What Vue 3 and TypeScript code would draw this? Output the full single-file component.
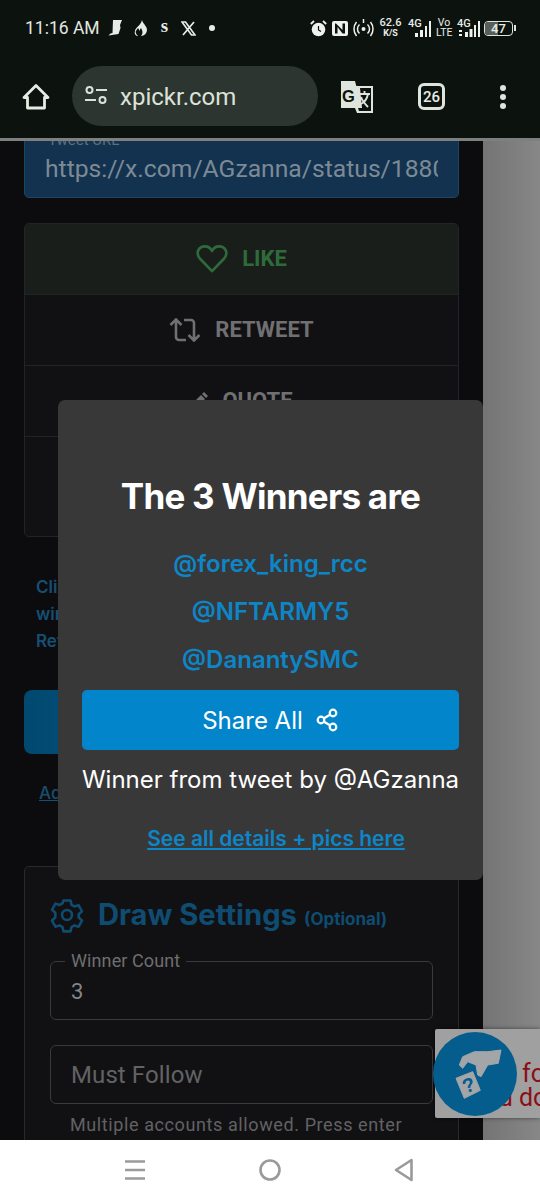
<template>
  <div class="phone">
    <header class="chrome">
      <div class="status">
        <span class="time">11:16 AM</span>
        <div class="notif">
          <svg width="15" height="18" viewBox="0 0 15 18"><path d="M5 1h9l-2 5 .5 3-2 6-10 1.500 2-2 2-.5z" fill="#e8ece6" /></svg>
          <svg width="14" height="16" viewBox="0 0 14 16"><path d="M8 0c1 4 5 6 5 10a6 6 0 0 1-6 6c2-2 2-5 0-8-1 1-1 2-1 3L4 8c-1 2-3 3-2 5 0 1 1 2 2 3-2 0-4-2-3-5 0-3 6-6 7-11z" fill="#e8ece6" /></svg>
          <span class="notif-s">s</span>
          <svg width="15" height="15" viewBox="0 0 15 15"><path d="M1 1h3.500l9.500 13h-3.500zM13 1 2 14" fill="none" stroke="#e8ece6" stroke-width="1.700" /></svg>
          <i class="notif-dot"></i>
        </div>
        <div class="sys">
          <svg width="17" height="17" viewBox="0 0 17 17"><circle cx="8.500" cy="9.500" r="6.800" fill="#eef1ec" /><path d="M8.500 6v4l2.500 1.500" fill="none" stroke="#0c130f" stroke-width="1.200" /><path d="M.8 4 4 1M16.200 4 13 1" stroke="#eef1ec" stroke-width="1.800" /></svg>
          <svg class="nfc" width="16" height="15" viewBox="0 0 16 15"><rect x="0" y="0" width="16" height="15" rx="2" fill="#eef1ec" /><path d="M4 2.500H3v10h2.500V6l5 6.500H13v-10h-2.500V9z" fill="#0c130f" /></svg>
          <svg class="hotspot" width="21" height="20" viewBox="0 0 21 20"><circle cx="10.500" cy="11" r="2" fill="#eef1ec" /><path d="M10.500 1v4M6.500 6.500a6 6 0 0 0 0 9M14.500 6.500a6 6 0 0 1 0 9M3.500 4a11 11 0 0 0 0 14M17.500 4a11 11 0 0 1 0 14" fill="none" stroke="#eef1ec" stroke-width="1.500" /></svg>
          <span class="speed">62.6<small>K/S</small></span>
          <div class="net">
            <span class="net-label">4G</span>
            <svg width="17" height="16" viewBox="0 0 17 16"><path d="M1 12h3v4H1zM6 9h3v7H6zM11 5h2v11h-2zM15 0h2v16h-2z" fill="#eef1ec" /></svg>
          </div>
          <span class="volte">Vo<br />LTE</span>
          <div class="net is-second">
            <span class="net-label">4G</span>
            <svg width="22" height="16" viewBox="0 0 22 16"><path d="M1 9h3v2H1zM1 13h3v2H1zM7 11h3v5H7zM11.500 8h3v8h-3zM16 4h2v12h-2zM20 0h2v16h-2z" fill="#eef1ec" /></svg>
          </div>
          <div class="battery">
            <div class="battery-body"><i class="battery-fill" :style="{ width: `${battery}%` }"></i><span>{{ battery }}</span></div>
            <i class="battery-tip"></i>
          </div>
        </div>
      </div>
      <div class="toolbar">
        <svg class="home" width="30" height="30" viewBox="0 0 30 30"><path d="M3 15.500 15 3.500l12 12h-3.500V26h-17V15.500z" fill="none" stroke="#e6ebe3" stroke-width="2.800" stroke-linejoin="round" /></svg>
        <div class="omnibox">
          <svg width="24" height="24" viewBox="0 0 24 24" fill="none" stroke="#dce2da" stroke-width="2"><circle cx="5.500" cy="6" r="3" /><path d="M12 6h11M1 16h11" /><circle cx="18.500" cy="16" r="3" /></svg>
          <span>xpickr.com</span>
        </div>
        <svg class="translate" width="34" height="34" viewBox="0 0 34 34">
          <path d="M1 1h14l7 27H1z" fill="#dfe5dc" />
          <path d="M15 6h18v27H17l-2-5z" fill="#dfe5dc" />
          <path d="M20 8h11v23H19l-1-3h4z" fill="#0c130f" />
          <text x="2" y="22" class="translate-g">G</text>
          <path d="M19 14h11M24.500 11v3M28 14c-1 5-3 8-7 10M21 17c1 3 4 7 7 10" fill="none" stroke="#dfe5dc" stroke-width="1.900" />
        </svg>
        <div class="tabs">26</div>
        <div class="kebab"><i></i><i></i><i></i></div>
      </div>
    </header>

    <main class="page">
      <div class="sheet">
        <div class="tweet-field">
          <label>Tweet URL</label>
          <div class="tweet-url">https://x.com/AGzanna/status/1880</div>
        </div>
        <div class="actions">
          <div class="action is-like">
            <svg width="32" height="30" viewBox="0 0 34 32"><path d="M17 29 4 15.500C-1 9 3 2.500 9.500 2.500c3.500 0 6 2 7.500 5 1.500-3 4-5 7.500-5C31 2.500 35 9 30 15.500z" fill="none" stroke="#2f6b3a" stroke-width="2.800" stroke-linejoin="round" /></svg>
            <span>LIKE</span>
          </div>
          <div class="action">
            <svg width="32" height="24" viewBox="0 0 32 24" fill="none" stroke="#707072" stroke-width="2.600"><path d="M1.500 7 7 1.500 12.500 7M7 2v17a3 3 0 0 0 3 3h7M19.500 17l5.500 5.500 5.500-5.500M25 22V5a3 3 0 0 0-3-3h-7" /></svg>
            <span>RETWEET</span>
          </div>
          <div class="action">
            <svg width="18" height="18" viewBox="0 0 18 18"><path d="M1 17v-4L11 3l4 4L5 17zM12 2l2-2 4 4-2 2z" fill="#707072" /></svg>
            <span>QUOTE</span>
          </div>
          <div class="action is-tall"></div>
        </div>
        <p class="hint">Click the<br />winners<br />Refresh</p>
        <div class="draw-btn"></div>
        <a class="advanced">Advanced</a>
        <section class="settings">
          <h2>
            <svg width="36" height="36" viewBox="0 0 24 24" fill="none" stroke="#0f4c72" stroke-width="1.700" stroke-linejoin="round"><path d="M9.600 2.300h4.800l.6 2.900 1.900 1.100 2.800-.9 2.300 4.100-2.200 2 .0 2.200 2.200 2-2.300 4.100-2.800-.9-1.900 1.100-.6 2.900H9.600l-.6-2.900-1.900-1.100-2.800.9-2.300-4.100 2.200-2V10.500l-2.200-2 2.300-4.100 2.800.9L9 4.200z" /><circle cx="12" cy="12" r="3.300" /></svg>
            <span>Draw Settings</span>
            <small>(Optional)</small>
          </h2>
          <div class="field">
            <label>Winner Count</label>
            <span class="field-value">3</span>
          </div>
          <div class="field is-follow">
            <span class="field-placeholder">Must Follow</span>
          </div>
          <p class="field-help">Multiple accounts allowed. Press enter</p>
        </section>
      </div>

      <div class="captcha">
        <span class="captcha-text"><span class="captcha-first">fo</span><br />u do</span>
        <div class="captcha-logo">
          <svg width="84" height="84" viewBox="0 0 84 84">
            <path d="M68 18 65.300 31.300 54.700 33 48 44.700 44.700 43 43 33 34.700 29.700 29.700 36.300 26.300 33 29.700 24.700 41.300 19.700 54.700 19.700z" fill="#a3a6a8" stroke="#a3a6a8" stroke-linejoin="round" />
            <path d="M23 46.300 39.700 39.700 47.300 58.300 31.300 66.300z" fill="#a3a6a8" stroke="#a3a6a8" stroke-linejoin="round" />
            <text x="35.500" y="60" text-anchor="middle" transform="rotate(-20 35.500 53)" class="captcha-q">?</text>
          </svg>
        </div>
      </div>

      <div class="modal">
        <h1>The {{ winners.length }} Winners are</h1>
        <a v-for="winner in winners" :key="winner" class="winner">{{ winner }}</a>
        <button class="share" type="button">
          Share All
          <svg width="24" height="24" viewBox="0 0 24 24" fill="none" stroke="#fff" stroke-width="2.200"><circle cx="18" cy="5" r="3.300" /><circle cx="6" cy="12" r="3.300" /><circle cx="18" cy="19" r="3.300" /><path d="M9 10.300 15 6.700M9 13.700l6 3.600" /></svg>
        </button>
        <p class="from">Winner from tweet by @AGzanna</p>
        <a class="details">See all details + pics here</a>
      </div>
    </main>

    <nav class="android-nav">
      <svg width="20" height="20" viewBox="0 0 20 20"><path d="M0 1.500h20M0 10h20M0 18.500h20" stroke="#9a9a9a" stroke-width="2.600" /></svg>
      <svg width="22" height="22" viewBox="0 0 22 22"><circle cx="11" cy="11" r="9.500" fill="none" stroke="#9a9a9a" stroke-width="2.600" /></svg>
      <svg width="20" height="24" viewBox="0 0 20 24"><path d="M17.500 2v20L2 12z" fill="none" stroke="#9a9a9a" stroke-width="2.600" stroke-linejoin="round" /></svg>
    </nav>
  </div>
</template>

<script setup lang="ts">
const battery = 47
const winners: string[] = ['@forex_king_rcc', '@NFTARMY5', '@DanantySMC']
</script>

<style>
html,
body {
  margin: 0;
  background: #fff;
}
</style>

<style scoped>
.phone {
  display: flex;
  flex-direction: column;
  width: 540px;
  height: 1200px;
  overflow: hidden;
  font-family: Roboto, "Liberation Sans", sans-serif;
}

.chrome {
  flex: 0 0 141px;
  box-sizing: border-box;
  height: 141px;
  background: #0c130f;
  border-bottom: 3px solid #7d807e;
  color: #e8ece6;
}

.status {
  display: flex;
  align-items: center;
  height: 56px;
  padding: 0 24px 0 25px;
}

.time {
  flex: 0 0 83px;
  font-size: 17.500px;
  white-space: nowrap;
  color: #e3e7e1;
}

.notif {
  display: flex;
  align-items: center;
  gap: 11px;
}

.notif-s {
  width: 11px;
  margin-top: -5px;
  font: 700 19px "Liberation Serif", serif;
  text-align: center;
}

.notif-dot {
  width: 6px;
  height: 6px;
  margin-left: 2px;
  border-radius: 50%;
  background: #e8ece6;
}

.sys {
  display: flex;
  align-items: center;
  margin-left: auto;
}

.nfc {
  margin-left: 5px;
}

.hotspot {
  margin-left: 5px;
}

.speed {
  display: flex;
  flex-direction: column;
  align-items: center;
  width: 21px;
  margin-left: 6px;
  font-size: 11px;
  line-height: 10px;
  font-weight: 500;
}

.speed small {
  font-size: 9px;
  font-weight: 700;
}

.net {
  display: flex;
  align-items: flex-end;
  height: 18px;
  margin-left: 7px;
}

.net.is-second {
  margin-left: 5px;
}

.net-label {
  width: 14px;
  margin-right: -8px;
  align-self: flex-start;
  font-size: 11px;
  line-height: 10px;
  font-weight: 500;
}

.net.is-second .net-label {
  margin-right: -13px;
}

.volte {
  width: 16px;
  margin-left: 5px;
  font-size: 10.500px;
  line-height: 10px;
  text-align: center;
}

.battery {
  display: flex;
  align-items: center;
  margin-left: 4px;
}

.battery-body {
  position: relative;
  display: flex;
  justify-content: center;
  align-items: center;
  width: 27px;
  height: 13px;
  border: 1.500px solid #dfe3dd;
  border-radius: 4px;
  overflow: hidden;
  font-size: 13px;
  font-weight: 500;
}

.battery-body span {
  position: relative;
}

.battery-fill {
  position: absolute;
  left: 0;
  top: 0;
  bottom: 0;
  background: #5a5e5b;
}

.battery-tip {
  width: 2px;
  height: 6px;
  margin-left: 1px;
  background: #dfe3dd;
}

.toolbar {
  display: flex;
  align-items: center;
  height: 82px;
  margin-top: -1px;
  padding-left: 21px;
}

.home {
  margin-top: 2px;
}

.omnibox {
  display: flex;
  align-items: center;
  gap: 12px;
  box-sizing: border-box;
  width: 246px;
  height: 60px;
  margin-left: 21px;
  padding-left: 12px;
  border-radius: 30px;
  background: #2c352f;
  font-size: 24px;
  color: #dce2da;
}

.omnibox span {
  padding-top: 1px;
}

.translate {
  margin-left: 22px;
  margin-top: 2px;
}

.translate-g {
  font: 700 16.500px "Liberation Sans", sans-serif;
  fill: #0c130f;
}

.tabs {
  display: flex;
  align-items: center;
  justify-content: center;
  width: 21px;
  height: 21px;
  margin-left: 44px;
  margin-top: 1px;
  border: 3px solid #dfe5dc;
  border-radius: 6px;
  font-size: 15px;
  font-weight: 500;
}

.kebab {
  display: flex;
  flex-direction: column;
  gap: 3px;
  margin-left: 55px;
  margin-top: 1px;
}

.kebab i {
  width: 6px;
  height: 6px;
  border-radius: 50%;
  background: #dfe5dc;
}

.page {
  position: relative;
  flex: 1;
  overflow: hidden;
  background: linear-gradient(90deg, #747474 483px, #878787 540px);
}

.sheet {
  box-sizing: border-box;
  width: 483px;
  height: 999px;
  padding: 0 24px;
  background: #0c0c0e;
  overflow: hidden;
}

.tweet-field {
  position: relative;
  margin-top: -2px;
  padding: 0 20px;
  height: 59px;
  box-sizing: border-box;
  display: flex;
  align-items: center;
  background: #12324f;
  border: 1px solid #1c4566;
  border-radius: 0 0 5px 5px;
}

.tweet-field label {
  position: absolute;
  top: -9px;
  left: 23px;
  font-size: 15px;
  color: #5f6f7b;
}

.tweet-url {
  width: 100%;
  font-size: 24.700px;
  color: #7c8a96;
  overflow: hidden;
  white-space: nowrap;
}

.actions {
  margin-top: 25px;
  height: 314px;
  box-sizing: border-box;
  border: 1px solid #232427;
  border-radius: 5px;
  background: #111113;
  overflow: hidden;
}

.action {
  display: flex;
  align-items: center;
  justify-content: center;
  gap: 14px;
  height: 71px;
  padding-bottom: 1px;
  border-bottom: 1px solid #222326;
  box-sizing: border-box;
  font-size: 22px;
  font-weight: 700;
  color: #707072;
}

.action.is-like {
  background: #191e1b;
  color: #2f6b3a;
}

.action.is-tall {
  border-bottom: 0;
  height: 100px;
}

.hint {
  margin: 37px 0 0 12px;
  height: 80px;
  font: 600 17px/27px Inter, sans-serif;
  color: #174f72;
}

.draw-btn {
  margin-top: 36px;
  height: 64px;
  border-radius: 8px;
  background: linear-gradient(90deg, #02486f, #035a8a 170px);
}

.advanced {
  display: block;
  margin: 28px 0 0 15px;
  height: 22px;
  font: 500 17px/22px Inter, sans-serif;
  color: #174f72;
  text-decoration: underline;
}

.settings {
  margin-top: 62px;
  height: 400px;
  box-sizing: border-box;
  padding: 0 25px;
  border: 1px solid #2a2a2d;
  border-radius: 5px;
  background: #111113;
}

.settings h2 {
  display: flex;
  align-items: baseline;
  gap: 7px;
  height: 94px;
  margin: 0;
  padding-top: 30px;
  box-sizing: border-box;
  font: 700 29.200px/36px Inter, sans-serif;
  color: #0f4c72;
}

.settings h2 svg {
  align-self: flex-start;
  margin-left: -1px;
  margin-right: 6px;
}

.settings h2 small {
  font-size: 17px;
}

.field {
  position: relative;
  display: flex;
  align-items: center;
  box-sizing: border-box;
  height: 59px;
  padding: 0 20px;
  border: 1px solid #3a3a3c;
  border-radius: 6px;
}

.field label {
  position: absolute;
  top: -11px;
  left: 14px;
  padding: 0 6px;
  background: #111113;
  font-size: 18px;
  letter-spacing: 0.1px;
  line-height: 20px;
  color: #6e6e70;
}

.field-value {
  padding-top: 2px;
  font-size: 22px;
  color: #858587;
}

.field-placeholder {
  font-size: 24px;
  letter-spacing: 0.1px;
  color: #626264;
}

.is-follow {
  margin-top: 25px;
}

.field-help {
  margin: 10px 0 0 20px;
  font-size: 18px;
  letter-spacing: 0.6px;
  white-space: nowrap;
  color: #626264;
}

.captcha {
  position: absolute;
  left: 435px;
  top: 888px;
  width: 105px;
  height: 89px;
  background: #a0a0a0;
  border-radius: 2px 0 0 2px;
  box-shadow: 0 0 4px rgba(0, 0, 0, 0.5);
}

.captcha-text {
  position: absolute;
  left: 64px;
  top: 33px;
  font: 25px/24px Roboto, sans-serif;
  white-space: nowrap;
  color: #8c0f18;
}

.captcha-first {
  margin-left: 23px;
}

.captcha-logo {
  position: absolute;
  left: -2px;
  top: 3px;
  width: 84px;
  height: 84px;
  border-radius: 50%;
  background: #045d8c;
}

.captcha-logo svg {
  display: block;
}

.captcha-q {
  font: 700 20px "Liberation Sans", sans-serif;
  fill: #045d8c;
}

.modal {
  position: absolute;
  left: 58px;
  top: 259px;
  box-sizing: border-box;
  width: 425px;
  height: 480px;
  padding: 0 24px;
  display: flex;
  flex-direction: column;
  align-items: center;
  background: #383838;
  border-radius: 7px;
  font-family: Inter, sans-serif;
  color: #fff;
}

.modal h1 {
  margin: 72px 0 20px;
  font-size: 35px;
  line-height: 48px;
  font-weight: 700;
  letter-spacing: -0.75px;
  white-space: nowrap;
}

.winner {
  height: 48px;
  font-size: 24px;
  line-height: 48px;
  font-weight: 600;
  color: #0d86c8;
}

.share {
  display: flex;
  align-items: center;
  justify-content: center;
  gap: 12px;
  flex: 0 0 60px;
  width: 100%;
  margin-top: 6px;
  border: 0;
  border-radius: 5px;
  background: #0385cb;
  color: #fff;
  font: 400 24px Inter, sans-serif;
}

.from {
  margin: 15px 0 0;
  font-size: 24px;
  line-height: 30px;
  white-space: nowrap;
}

.details {
  margin-top: 29px;
  margin-left: 11px;
  font-size: 21px;
  line-height: 30px;
  font-weight: 600;
  color: #0d86c8;
  text-decoration: underline;
}

.android-nav {
  flex: 0 0 60px;
  display: flex;
  align-items: center;
  justify-content: space-between;
  padding: 0 126px 0 125px;
  background: #fff;
}
</style>
